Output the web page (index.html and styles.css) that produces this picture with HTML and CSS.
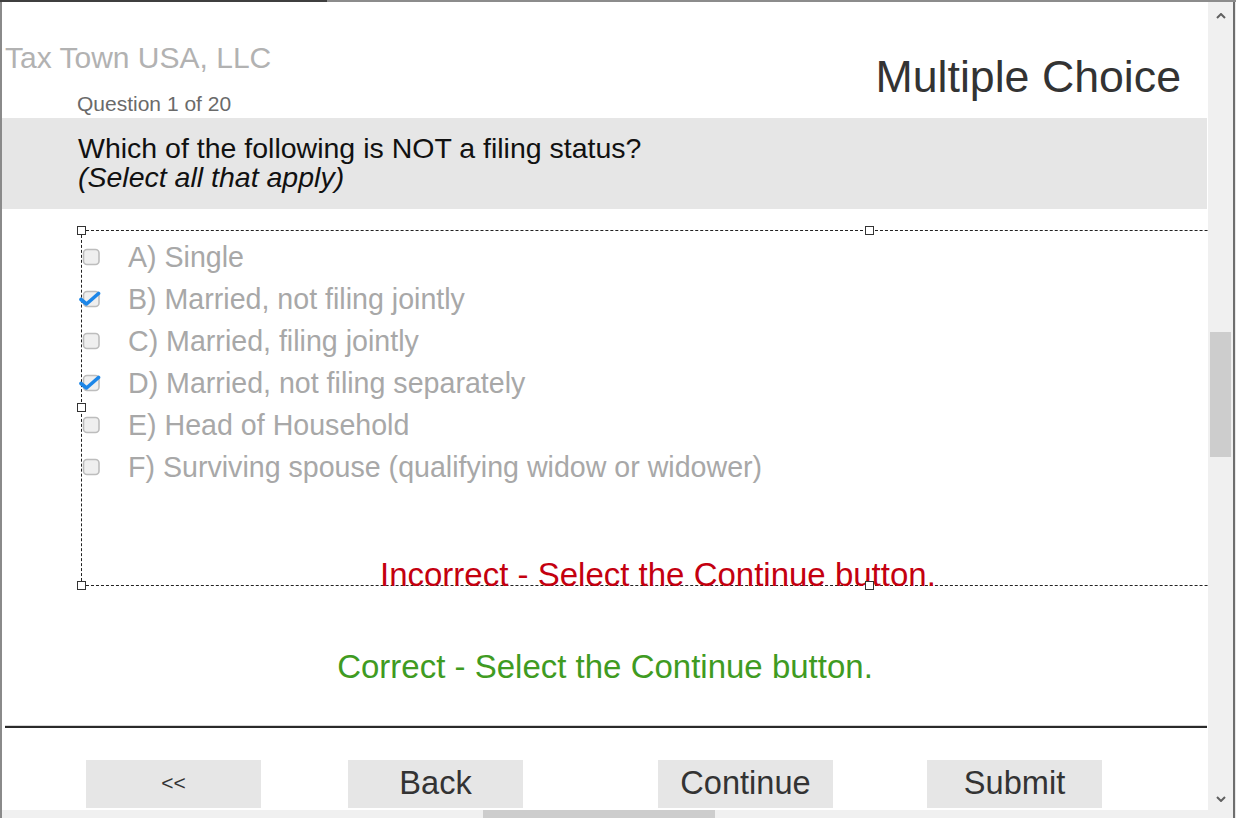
FILE: index.html
```html
<!DOCTYPE html>
<html>
<head>
<meta charset="utf-8">
<title>Multiple Choice</title>
<link rel="stylesheet" href="styles.css">
</head>
<body>
<div class="frame">
  <div class="topbar"><span class="tb-dark"></span><span class="tb-light"></span></div>
  <div class="content">
    <header class="header">
      <div class="brand">
        <div class="company">Tax Town USA, LLC</div>
        <div class="qcount">Question 1 of 20</div>
      </div>
      <h1 class="title">Multiple Choice</h1>
    </header>
    <section class="band">
      <div class="qtext">Which of the following is NOT a filing status?</div>
      <div class="qhint">(Select all that apply)</div>
    </section>
    <section class="answers">
      <span class="handle h-tl"></span>
      <span class="handle h-tm"></span>
      <span class="handle h-ml"></span>
      <span class="handle h-bl"></span>
      <span class="handle h-bm"></span>
      <ul class="options">
        <li class="option"><svg class="cb" viewBox="0 0 24 18" width="24" height="18"><rect x="4.5" y="1.5" width="15.5" height="15" rx="3.5" class="cb-box"/></svg><span class="opt-text">A) Single</span></li>
        <li class="option"><svg class="cb" viewBox="0 0 24 18" width="24" height="18"><rect x="4.5" y="1.5" width="15.5" height="15" rx="3.5" class="cb-box"/><path d="M2 9.5 L7.5 14 L19.5 3.5" class="cb-check"/></svg><span class="opt-text">B) Married, not filing jointly</span></li>
        <li class="option"><svg class="cb" viewBox="0 0 24 18" width="24" height="18"><rect x="4.5" y="1.5" width="15.5" height="15" rx="3.5" class="cb-box"/></svg><span class="opt-text">C) Married, filing jointly</span></li>
        <li class="option"><svg class="cb" viewBox="0 0 24 18" width="24" height="18"><rect x="4.5" y="1.5" width="15.5" height="15" rx="3.5" class="cb-box"/><path d="M2 9.5 L7.5 14 L19.5 3.5" class="cb-check"/></svg><span class="opt-text">D) Married, not filing separately</span></li>
        <li class="option"><svg class="cb" viewBox="0 0 24 18" width="24" height="18"><rect x="4.5" y="1.5" width="15.5" height="15" rx="3.5" class="cb-box"/></svg><span class="opt-text">E) Head of Household</span></li>
        <li class="option"><svg class="cb" viewBox="0 0 24 18" width="24" height="18"><rect x="4.5" y="1.5" width="15.5" height="15" rx="3.5" class="cb-box"/></svg><span class="opt-text">F) Surviving spouse (qualifying widow or widower)</span></li>
      </ul>
      <div class="msg-incorrect">Incorrect - Select the Continue button.</div>
    </section>
    <div class="msg-correct">Correct - Select the Continue button.</div>
    <hr class="divider">
    <nav class="buttons">
      <button class="btn btn-first">&lt;&lt;</button>
      <button class="btn btn-back">Back</button>
      <button class="btn btn-continue">Continue</button>
      <button class="btn btn-submit">Submit</button>
    </nav>
  </div>
  <div class="vscroll">
    <svg class="arrow" viewBox="0 0 10 6" width="10" height="6"><path d="M1 5 L5 1 L9 5" class="arrow-path"/></svg>
    <div class="vtrack"><div class="vthumb"></div></div>
    <svg class="arrow" viewBox="0 0 10 6" width="10" height="6"><path d="M1 1 L5 5 L9 1" class="arrow-path"/></svg>
  </div>
  <div class="hscroll">
    <svg class="harrow" viewBox="0 0 6 10" width="6" height="10"><path d="M5 1 L1 5 L5 9" class="arrow-path"/></svg>
    <div class="hthumb"></div>
    <svg class="harrow harrow-r" viewBox="0 0 6 10" width="6" height="10"><path d="M1 1 L5 5 L1 9" class="arrow-path"/></svg>
  </div>
</div>
</body>
</html>
```

FILE: styles.css
```css
* { box-sizing: border-box; }
html, body { margin: 0; padding: 0; background: #ffffff; }
body {
  width: 1236px;
  height: 818px;
  overflow: hidden;
  font-family: "Liberation Sans", Arial, sans-serif;
}
.frame {
  width: 1236px;
  height: 818px;
  display: grid;
  grid-template-columns: 2px 1206px 25px 3px;
  grid-template-rows: 2px 808px 8px;
  background: #ffffff;
}
.topbar {
  grid-column: 1 / 5;
  grid-row: 1;
  display: flex;
}
.tb-dark { width: 327px; background: #3f3f3f; }
.tb-light { flex: 1; background: #8c8c8c; }
.frame::before {
  content: "";
  grid-column: 1;
  grid-row: 2 / 4;
  background: #8a8a8a;
}
.frame::after {
  content: "";
  grid-column: 4;
  grid-row: 2 / 4;
  background: linear-gradient(to right, #6e6e6e 0, #6e6e6e 2px, #e8e8e8 2px);
}
.content {
  grid-column: 2;
  grid-row: 2;
  overflow: hidden;
  position: relative;
}
.header {
  display: flex;
  justify-content: space-between;
  align-items: flex-start;
  height: 116px;
}
.brand { padding-left: 3px; }
.company {
  margin-top: 39px;
  font-size: 30px;
  line-height: 34px;
  color: #b2b2b2;
  white-space: nowrap;
}
.qcount {
  margin-top: 17px;
  margin-left: 72px;
  font-size: 21px;
  line-height: 24px;
  color: #6a6a6a;
  white-space: nowrap;
}
.title {
  margin: 50px 27px 0 0;
  font-size: 44.7px;
  line-height: 50px;
  font-weight: normal;
  color: #333333;
  white-space: nowrap;
}
.band {
  background: #e6e6e6;
  margin-right: 1px;
  height: 91px;
  padding: 16px 0 0 76px;
  font-size: 28.5px;
  line-height: 29px;
  color: #111111;
}
.qhint { font-style: italic; }
.answers {
  position: relative;
  margin: 21px 0 0 79px;
  width: 1576px;
  height: 356px;
  border: 1px dashed #222222;
  display: flex;
  flex-direction: column;
  padding-top: 5px;
}
.handle {
  position: absolute;
  width: 9px;
  height: 9px;
  background: #ffffff;
  border: 1.5px solid #333333;
}
.h-tl { left: -5px; top: -5px; }
.h-tm { left: 783px; top: -5px; }
.h-ml { left: -5px; top: 172px; }
.h-bl { left: -5px; bottom: -5px; }
.h-bm { left: 783px; bottom: -5px; }
.options {
  list-style: none;
  margin: 0;
  padding: 0;
}
.option {
  display: flex;
  align-items: center;
  height: 42px;
  font-size: 28.6px;
  color: #a8a8a8;
  white-space: nowrap;
}
.cb {
  display: block;
  margin-left: -3px;
  margin-right: 25px;
  flex: none;
}
.cb-box {
  fill: #efefef;
  stroke: #bdbdbd;
  stroke-width: 1.6;
}
.cb-check {
  fill: none;
  stroke: #1c86e8;
  stroke-width: 3.6;
  stroke-linecap: round;
  stroke-linejoin: round;
}
.msg-incorrect {
  margin-top: auto;
  margin-bottom: -8px;
  margin-left: 298px;
  font-size: 33px;
  line-height: 36px;
  color: #c4000f;
  white-space: nowrap;
}
.msg-correct {
  margin-top: 62px;
  text-align: center;
  font-size: 33px;
  line-height: 37px;
  color: #3f9b22;
}
.divider {
  margin: 40px 1px 0 3px;
  height: 3px;
  border: 0;
  border-top: 1px solid #d6d6d6;
  border-bottom: 2px solid #2a2a2a;
}
.buttons {
  display: flex;
  margin-top: 32px;
  padding-left: 84px;
}
.btn {
  width: 175px;
  height: 48px;
  border: 0;
  padding: 0 0 3px;
  background: #e6e6e6;
  font-family: "Liberation Sans", Arial, sans-serif;
  font-size: 32.6px;
  line-height: 45px;
  color: #333333;
}
.btn-first { font-size: 21px; }
.btn-back { margin-left: 87px; }
.btn-continue { margin-left: 135px; }
.btn-submit { margin-left: 94px; }
.vscroll {
  grid-column: 3;
  grid-row: 2 / 4;
  background: #f0f0f0;
  display: flex;
  flex-direction: column;
  align-items: center;
  padding: 11px 0 16px;
}
.arrow { display: block; flex: none; }
.arrow-path {
  fill: none;
  stroke: #606060;
  stroke-width: 2;
}
.vtrack {
  flex: 1;
  width: 100%;
  padding: 313px 2px 0;
}
.vthumb {
  height: 125px;
  background: #cdcdcd;
}
.hscroll {
  grid-column: 2;
  grid-row: 3;
  background: #f0f0f0;
  display: flex;
  align-items: flex-start;
  padding-top: 2px;
  overflow: hidden;
}
.harrow { display: block; flex: none; margin: 6px 0 0 9px; }
.hthumb {
  width: 232px;
  height: 8px;
  margin: -2px 0 0 466px;
  background: #cdcdcd;
}
.harrow-r { margin-left: auto; margin-right: 15px; }
```
